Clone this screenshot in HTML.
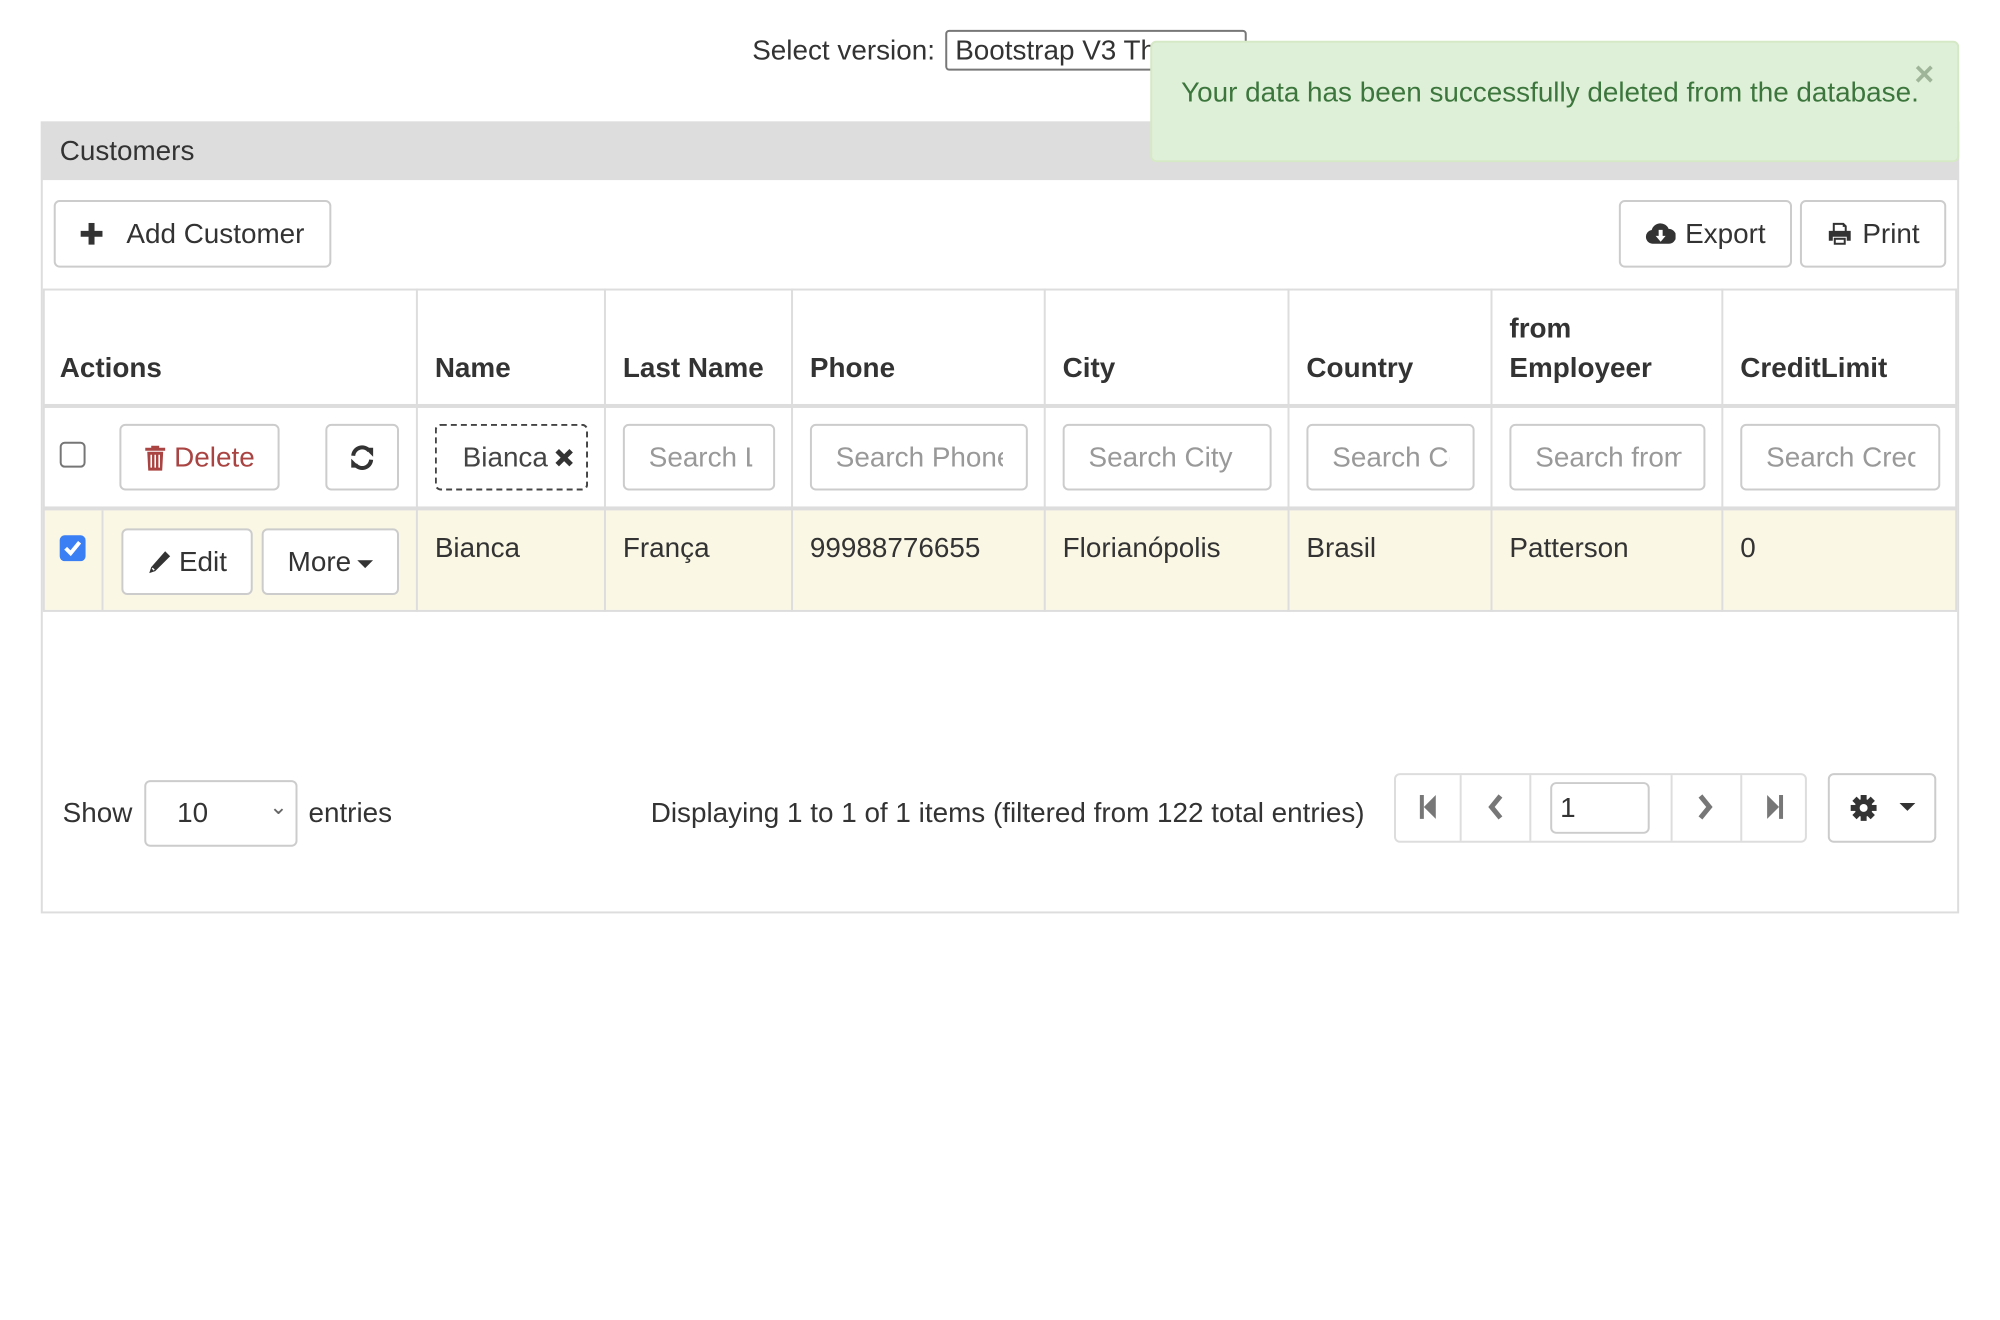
<!DOCTYPE html>
<html><head><meta charset="utf-8"><style>
*{box-sizing:border-box;margin:0;padding:0}
body{width:2000px;height:1320px;background:#fff;font-family:"Liberation Sans",Arial,sans-serif;font-size:28px;color:#333;position:relative;overflow:hidden}
#w{position:absolute;left:0;top:0;width:2000px;height:1320px;transform:scale(0.995);transform-origin:0 0}
.a{position:absolute}
.btn{position:absolute;border:2px solid #ccc;border-radius:6px;background:#fff;display:flex;align-items:center;justify-content:center;color:#333;white-space:nowrap}
.inp{position:absolute;border:2px solid #ccc;border-radius:6px;background:#fff;color:#999;padding-left:24px;display:flex;align-items:center;white-space:nowrap}
.inp span{display:block;overflow:hidden}
.th{position:absolute;font-weight:bold;color:#333}
.vl{position:absolute;width:2px;background:#ddd}
.hl{position:absolute;height:2px;background:#ddd}
.td{position:absolute;top:535px}
</style></head><body><div id="w">
<div class="a" style="left:756px;top:35px">Select version:</div>
<div class="a" style="left:950px;top:30px;width:303px;height:41px;border:2px solid #777;border-radius:4px;padding:4px 8px;line-height:30px">Bootstrap V3 Theme</div>

<div class="a" style="left:41px;top:122px;width:1928px;height:796px;border:2px solid #ddd;background:#fff"></div>
<div class="a" style="left:41px;top:122px;width:1928px;height:59px;background:#dddddd"></div>
<div class="a" style="left:60px;top:136px">Customers</div>

<div class="a" style="left:1156px;top:41px;width:813px;height:122px;background:#dff0d8;border:2px solid #d6e9c6;border-radius:6px;color:#3c763d;padding:34px 0 0 29px">Your data has been successfully deleted from the database.</div>
<div class="a" style="left:1924px;top:58px;color:#9fb59a;font-size:34px;font-weight:bold;line-height:34px">×</div>

<div class="btn" style="left:54px;top:201px;width:279px;height:68px"><svg width="22" height="22" viewBox="0 0 22 22" style="margin-right:24px"><path d="M8 0h6v8h8v6h-8v8h-6v-8h-8v-6h8z" fill="#333"/></svg>Add Customer</div>
<div class="btn" style="left:1627px;top:201px;width:174px;height:68px"><svg width="30" height="24" viewBox="0 0 30 24" style="margin-right:10px"><path d="M7 22a7 7 0 0 1-1-13.9A9 9 0 0 1 23 7a7.5 7.5 0 0 1 0 15z" fill="#333"/><path d="M13 8h4v6h3l-5 6-5-6h3z" fill="#fff"/></svg>Export</div>
<div class="btn" style="left:1809px;top:201px;width:147px;height:68px"><svg width="26" height="26" viewBox="0 0 26 26" style="margin-right:10px"><path d="M6 2h11l3 3v5h-2V6h-2V4H8v6H6z M2 10h22v10h-4v-4H6v4H2z M7 17h12v7H7z" fill="#333"/><rect x="9" y="19" width="8" height="3" fill="#fff"/></svg>Print</div>

<div class="hl" style="left:44px;top:290px;width:1923px"></div>
<div class="hl" style="left:44px;top:406px;width:1923px;height:4px"></div>
<div class="hl" style="left:44px;top:509px;width:1923px;height:4px"></div>
<div class="a" style="left:44px;top:513px;width:1923px;height:100px;background:#faf7e5"></div>
<div class="hl" style="left:44px;top:613px;width:1923px"></div>
<div class="vl" style="left:43px;top:290px;height:325px"></div>
<div class="vl" style="left:418px;top:290px;height:325px"></div>
<div class="vl" style="left:607px;top:290px;height:325px"></div>
<div class="vl" style="left:795px;top:290px;height:325px"></div>
<div class="vl" style="left:1049px;top:290px;height:325px"></div>
<div class="vl" style="left:1294px;top:290px;height:325px"></div>
<div class="vl" style="left:1498px;top:290px;height:325px"></div>
<div class="vl" style="left:1730px;top:290px;height:325px"></div>
<div class="vl" style="left:1965px;top:290px;height:325px"></div>
<div class="vl" style="left:102px;top:513px;height:100px"></div>

<div class="th" style="left:60px;top:354px">Actions</div>
<div class="th" style="left:437px;top:354px">Name</div>
<div class="th" style="left:626px;top:354px">Last Name</div>
<div class="th" style="left:814px;top:354px">Phone</div>
<div class="th" style="left:1068px;top:354px">City</div>
<div class="th" style="left:1313px;top:354px">Country</div>
<div class="th" style="left:1517px;top:314px">from</div>
<div class="th" style="left:1517px;top:354px">Employeer</div>
<div class="th" style="left:1749px;top:354px">CreditLimit</div>

<div class="a" style="left:60px;top:444px;width:26px;height:26px;border:2px solid #767676;border-radius:5px;background:#fff"></div>
<div class="btn" style="left:120px;top:426px;width:161px;height:67px;color:#a94442"><svg width="22" height="28" viewBox="0 0 22 28" style="margin-right:8px"><path d="M7 2h8v2h6v3H1V4h6z M3 8h16l-1 19H4z" fill="#a94442"/><path d="M7 11v13M11 11v13M15 11v13" stroke="#fff" stroke-width="1.6"/></svg>Delete</div>
<div class="btn" style="left:327px;top:426px;width:74px;height:67px"><svg width="26" height="26" viewBox="0 0 26 26"><path d="M4 11A9 9 0 0 1 20 6" fill="none" stroke="#333" stroke-width="4"/><path d="M22 15A9 9 0 0 1 6 20" fill="none" stroke="#333" stroke-width="4"/><path d="M15 3h9v9z" fill="#333"/><path d="M11 23H2v-9z" fill="#333"/></svg></div>
<div class="a" style="left:437px;top:426px;width:154px;height:67px;border:2px dashed #444;border-radius:6px;display:flex;align-items:center;padding-left:26px;color:#444">Bianca<svg width="20" height="20" viewBox="0 0 20 20" style="margin-left:6px"><path d="M3 3l14 14M17 3L3 17" stroke="#333" stroke-width="5"/></svg></div>
<div class="inp" style="left:626px;top:426px;width:153px;height:67px"><span style="width:104px">Search Last Name</span></div>
<div class="inp" style="left:814px;top:426px;width:219px;height:67px"><span style="width:168px">Search Phone</span></div>
<div class="inp" style="left:1068px;top:426px;width:210px;height:67px"><span style="width:160px">Search City</span></div>
<div class="inp" style="left:1313px;top:426px;width:169px;height:67px"><span style="width:118px">Search Country</span></div>
<div class="inp" style="left:1517px;top:426px;width:197px;height:67px"><span style="width:147px">Search from</span></div>
<div class="inp" style="left:1749px;top:426px;width:201px;height:67px"><span style="width:150px">Search CreditLimit</span></div>

<div class="a" style="left:60px;top:538px;width:26px;height:26px;border-radius:5px;background:#3b7ff5"><svg width="26" height="26" viewBox="0 0 26 26"><path d="M6 13l5 5 9-11" fill="none" stroke="#fff" stroke-width="4"/></svg></div>
<div class="btn" style="left:122px;top:531px;width:132px;height:67px"><svg width="24" height="24" viewBox="0 0 24 24" style="margin-right:8px"><path d="M18 1l5 5L8 21l-6 2 2-6z" fill="#333"/><path d="M5 18l2 2" stroke="#fff" stroke-width="1.5"/></svg>Edit</div>
<div class="btn" style="left:263px;top:531px;width:138px;height:67px">More<svg width="16" height="10" viewBox="0 0 16 10" style="margin-left:6px;margin-top:6px"><path d="M0 0h16L8 8z" fill="#333"/></svg></div>
<div class="td" style="left:437px">Bianca</div>
<div class="td" style="left:626px">França</div>
<div class="td" style="left:814px">99988776655</div>
<div class="td" style="left:1068px">Florianópolis</div>
<div class="td" style="left:1313px">Brasil</div>
<div class="td" style="left:1517px">Patterson</div>
<div class="td" style="left:1749px">0</div>

<div class="a" style="left:63px;top:801px">Show</div>
<div class="a" style="left:145px;top:784px;width:154px;height:67px;border:2px solid #ccc;border-radius:6px;padding:15px 0 0 31px">10<span style="position:absolute;right:8px;top:12px;color:#666;font-size:22px">⌄</span></div>
<div class="a" style="left:310px;top:801px">entries</div>
<div class="a" style="left:654px;top:801px">Displaying 1 to 1 of 1 items (filtered from 122 total entries)</div>
<div id="pg" class="a" style="left:8px;top:2px;width:2000px;height:1px">
<div class="a" style="left:1393px;top:775px;width:415px;height:70px;border:2px solid #ddd;border-radius:6px"></div>
<div class="vl" style="left:1459px;top:777px;height:66px"></div>
<div class="vl" style="left:1529px;top:777px;height:66px"></div>
<div class="vl" style="left:1671px;top:777px;height:66px"></div>
<div class="vl" style="left:1741px;top:777px;height:66px"></div>
<svg class="a" style="left:1418px;top:795px" width="20" height="28" viewBox="0 0 20 28"><rect x="1" y="2" width="4" height="24" fill="#777"/><path d="M17 2v24L5 14z" fill="#777"/></svg>
<svg class="a" style="left:1486px;top:795px" width="18" height="28" viewBox="0 0 18 28"><path d="M14 3L5 14l9 11" fill="none" stroke="#777" stroke-width="5"/></svg>
<div class="a" style="left:1550px;top:784px;width:100px;height:52px;border:2px solid #ccc;border-radius:6px;padding:8px 0 0 8px;color:#333">1</div>
<svg class="a" style="left:1697px;top:795px" width="18" height="28" viewBox="0 0 18 28"><path d="M4 3l9 11-9 11" fill="none" stroke="#777" stroke-width="5"/></svg>
<svg class="a" style="left:1765px;top:795px" width="20" height="28" viewBox="0 0 20 28"><rect x="15" y="2" width="4" height="24" fill="#777"/><path d="M3 2v24L15 14z" fill="#777"/></svg>
<div class="btn" style="left:1829px;top:775px;width:109px;height:70px"><svg width="28" height="28" viewBox="0 0 28 28"><g fill="#333"><circle cx="14" cy="14" r="9"/><rect x="11" y="1" width="6" height="26"/><rect x="1" y="11" width="26" height="6"/><rect x="11" y="1" width="6" height="26" transform="rotate(45 14 14)"/><rect x="11" y="1" width="6" height="26" transform="rotate(-45 14 14)"/></g><circle cx="14" cy="14" r="4" fill="#fff"/></svg><svg width="16" height="10" viewBox="0 0 16 10" style="margin-left:22px"><path d="M0 0h16L8 8z" fill="#333"/></svg></div>
</div>
</div></body></html>
